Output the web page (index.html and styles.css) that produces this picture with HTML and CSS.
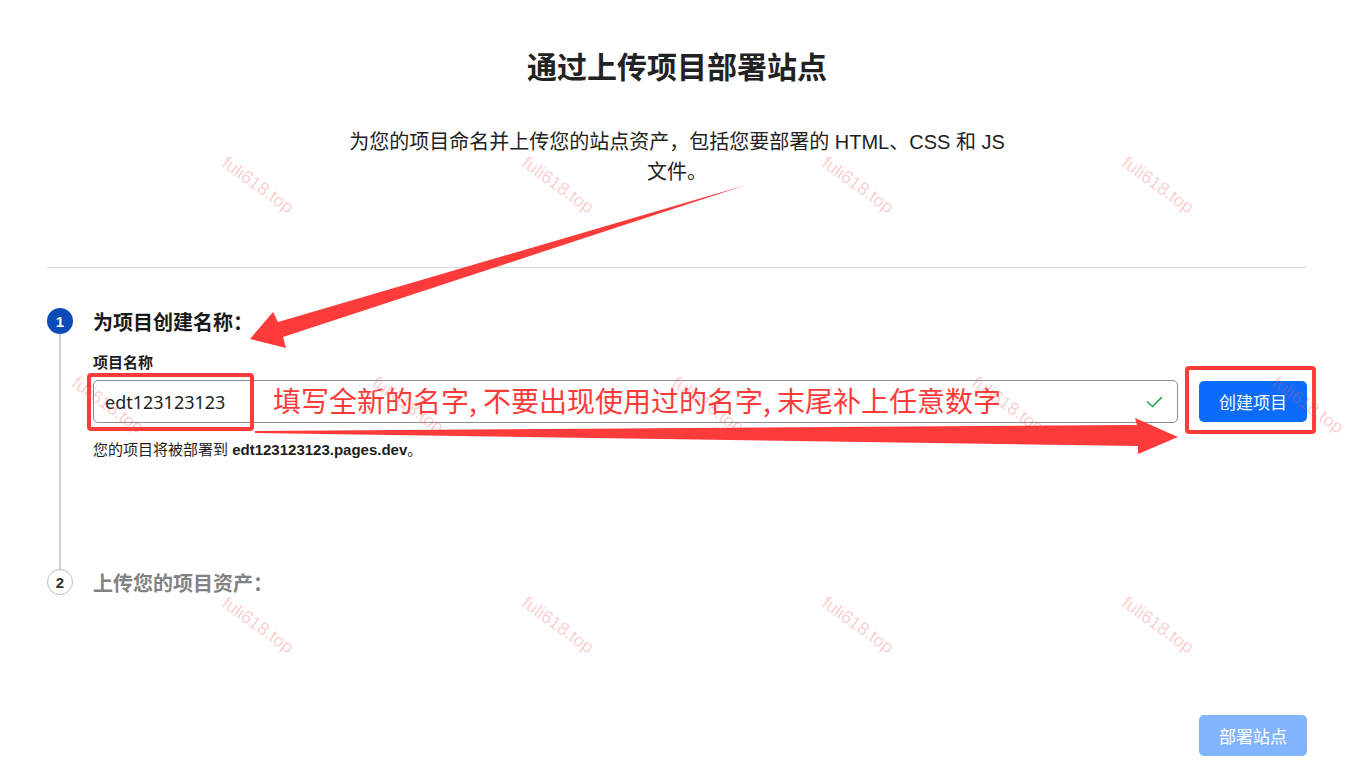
FILE: index.html
```html
<!DOCTYPE html>
<html lang="zh-CN">
<head>
    <meta charset="UTF-8">
    <meta name="viewport" content="width=device-width, initial-scale=1.0">
    <title>通过上传项目部署站点</title>
    <link rel="stylesheet" href="styles.css">
</head>
<body>
    <div class="page">
        <header class="intro">
            <h1 class="intro-title">通过上传项目部署站点</h1>
            <p class="intro-text">为您的项目命名并上传您的站点资产，包括您要部署的 HTML、CSS 和 JS 文件。</p>
        </header>

        <hr class="divider">

        <section class="step step-active">
            <div class="step-head">
                <span class="step-num">1</span>
                <h2 class="step-title">为项目创建名称：</h2>
            </div>
            <div class="step-body">
                <label class="field-label" for="projectName">项目名称</label>
                <div class="field-row">
                    <div class="name-field">
                        <input id="projectName" class="name-input" type="text" value="edt123123123">
                        <svg class="check-icon" width="17" height="12" viewBox="0 0 17 12">
                            <path d="M1 5.5 L6.5 10.5 L16 1" fill="none" stroke="#1ea64a" stroke-width="1.6"/>
                        </svg>
                    </div>
                    <button class="btn btn-primary">创建项目</button>
                </div>
                <p class="field-hint">您的项目将被部署到 <b>edt123123123.pages.dev</b>。</p>
            </div>
        </section>

        <section class="step step-pending">
            <div class="step-head">
                <span class="step-num">2</span>
                <h2 class="step-title">上传您的项目资产：</h2>
            </div>
        </section>

        <div class="page-footer">
            <button class="btn btn-disabled" disabled>部署站点</button>
        </div>
    </div>

    <!-- red marks drawn over the screenshot -->
    <div class="annotations">
        <svg class="arrows" width="1347" height="784" viewBox="0 0 1347 784">
            <polygon points="746,185 278,322 273,312 250,339 286,348 283,337" fill="#fd3b3b"/>
            <polygon points="255,431 1137,425 1135,418 1178,437 1138,454 1138,446 255,433" fill="#fd3b3b"/>
        </svg>
        <div class="mark-box mark-input"></div>
        <div class="mark-box mark-button"></div>
        <div class="note">填写全新的名字, 不要出现使用过的名字, 末尾补上任意数字</div>
    </div>

    <div class="watermarks">
        <div class="wm-grid">
            <span></span><span class="wm">fuli618.top</span><span></span><span class="wm">fuli618.top</span><span></span><span class="wm">fuli618.top</span><span></span><span class="wm">fuli618.top</span><span></span>
            <span class="wm">fuli618.top</span><span></span><span class="wm">fuli618.top</span><span></span><span class="wm">fuli618.top</span><span></span><span class="wm">fuli618.top</span><span></span><span class="wm">fuli618.top</span>
            <span></span><span class="wm">fuli618.top</span><span></span><span class="wm">fuli618.top</span><span></span><span class="wm">fuli618.top</span><span></span><span class="wm">fuli618.top</span><span></span>
        </div>
    </div>
</body>
</html>
```

FILE: styles.css
```css
body {
    margin: 0;
    min-height: 784px;
    position: relative;
    overflow: hidden;
    background: #fff;
    color: #1d1d1d;
    font-family: "Liberation Sans", "Noto Sans CJK SC", sans-serif;
}

.page {
    padding: 48px 40px 0 47px;
}

.intro {
    text-align: center;
}

.intro-title {
    margin: 0;
    font-size: 30px;
    line-height: 40px;
    font-weight: bold;
    color: #222;
}

.intro-text {
    max-width: 680px;
    margin: 39px auto 0;
    font-size: 20px;
    line-height: 30px;
    color: #222;
}

.divider {
    margin: 80px 0 40px;
    border: 0;
    border-top: 1px solid #dcdcdc;
}

.step-head {
    display: flex;
    align-items: center;
    gap: 20px;
    height: 26px;
}

.step-num {
    box-sizing: border-box;
    width: 26px;
    height: 26px;
    border-radius: 50%;
    display: flex;
    align-items: center;
    justify-content: center;
    font-size: 15px;
    font-weight: bold;
}

.step-active .step-num {
    background-color: #0b4cb8;
    color: #fff;
}

.step-pending .step-num {
    border: 1px solid #bdbdbd;
    background-color: #fff;
    color: #333;
}

.step-title {
    margin: 0;
    font-size: 20px;
    font-weight: bold;
    color: #1a1a1a;
}

.step-pending .step-title {
    color: #828282;
}

.step-body {
    margin-left: 12px;
    border-left: 2px solid #d0d0d0;
    padding: 19px 0 109px 32px;
}

.field-label {
    display: block;
    margin-bottom: 7px;
    font-size: 15px;
    line-height: 20px;
    font-weight: bold;
}

.field-row {
    display: flex;
    align-items: center;
    gap: 21px;
}

.name-field {
    flex: 1;
    box-sizing: border-box;
    height: 43px;
    display: flex;
    align-items: center;
    padding: 0 14px 0 11px;
    border: 1px solid #8d8d8d;
    border-radius: 5px;
}

.name-input {
    flex: 1;
    padding: 0;
    border: 0;
    outline: none;
    background: transparent;
    color: #1d1d1d;
    font-family: "Noto Sans", "Liberation Sans", sans-serif;
    font-size: 18px;
}

.check-icon {
    display: block;
}

.btn {
    width: 108px;
    height: 41px;
    border: none;
    border-radius: 5px;
    color: #fff;
    font-family: "Noto Sans CJK SC", sans-serif;
    font-size: 17px;
    cursor: pointer;
}

.btn-primary {
    background-color: #0b6cfb;
}

.btn-disabled {
    background-color: #82b5ff;
    cursor: default;
}

.field-hint {
    margin: 17px 0 0;
    font-size: 15px;
    line-height: 20px;
}

.page-footer {
    display: flex;
    justify-content: flex-end;
    margin-top: 120px;
}

/* annotation layer */
.annotations {
    position: absolute;
    inset: 0;
    pointer-events: none;
}

.arrows {
    position: absolute;
    left: 0;
    top: 0;
}

.mark-box {
    position: absolute;
    box-sizing: border-box;
    border: 4px solid #fd3b3b;
    border-radius: 4px;
}

.mark-input {
    left: 87px;
    top: 373px;
    width: 167px;
    height: 58px;
}

.mark-button {
    left: 1185px;
    top: 366px;
    width: 131px;
    height: 68px;
}

.note {
    position: absolute;
    left: 273px;
    top: 380px;
    font-family: "Noto Sans CJK SC", sans-serif;
    font-size: 28px;
    line-height: 40px;
    color: #fd3b3b;
    white-space: nowrap;
}

/* watermark layer */
.watermarks {
    position: absolute;
    inset: 0;
    overflow: hidden;
    pointer-events: none;
}

.wm-grid {
    position: absolute;
    left: 33px;
    top: 75px;
    display: grid;
    grid-template-columns: repeat(9, 150px);
    grid-template-rows: repeat(3, 220px);
}

.wm-grid span {
    display: flex;
    align-items: center;
    justify-content: center;
}

.wm {
    transform: rotate(36deg);
    font-family: "Liberation Sans", sans-serif;
    font-size: 18px;
    color: rgba(235, 80, 80, 0.28);
    white-space: nowrap;
}
```
